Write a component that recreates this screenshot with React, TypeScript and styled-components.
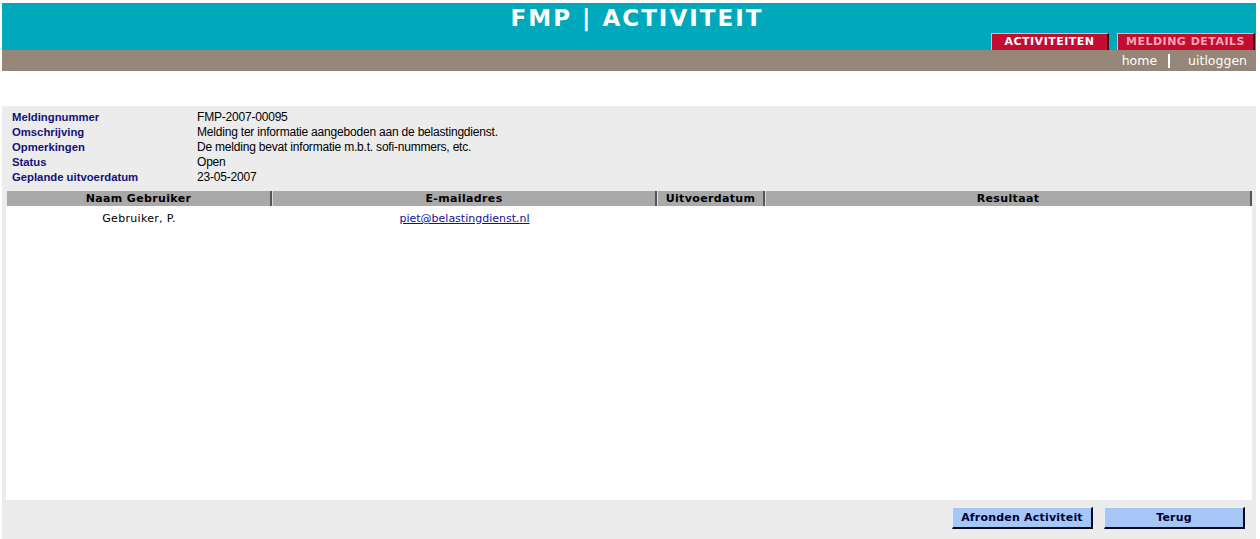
import React, { FunctionComponent } from "react";
import styled, { createGlobalStyle } from "styled-components";

interface TabProps {
  active?: boolean;
  width: number;
}

interface MeldingField {
  label: string;
  value: string;
}

interface Gebruiker {
  naam: string;
  email: string;
  uitvoerdatum: string;
  resultaat: string;
}

const meldingFields: MeldingField[] = [
  { label: "Meldingnummer", value: "FMP-2007-00095" },
  {
    label: "Omschrijving",
    value: "Melding ter informatie aangeboden aan de belastingdienst."
  },
  {
    label: "Opmerkingen",
    value: "De melding bevat informatie m.b.t. sofi-nummers, etc."
  },
  { label: "Status", value: "Open" },
  { label: "Geplande uitvoerdatum", value: "23-05-2007" }
];

const gebruikers: Gebruiker[] = [
  {
    naam: "Gebruiker, P.",
    email: "piet@belastingdienst.nl",
    uitvoerdatum: "",
    resultaat: ""
  }
];

const columns = ["Naam Gebruiker", "E-mailadres", "Uitvoerdatum", "Resultaat"];

const App: FunctionComponent = () => {
  return (
    <Page>
      <GlobalStyle />
      <Header>
        <Title>FMP | ACTIVITEIT</Title>
        <TabRow>
          <Tab active width={118}>
            ACTIVITEITEN
          </Tab>
          <Tab width={138}>MELDING DETAILS</Tab>
        </TabRow>
      </Header>
      <NavBar>
        <NavLink href="#">home</NavLink>
        <NavDivider />
        <NavLink href="#">uitloggen</NavLink>
      </NavBar>
      <Spacer />
      <Panel>
        <InfoList>
          {meldingFields.map(field => (
            <InfoRow key={field.label}>
              <InfoLabel>{field.label}</InfoLabel>
              <InfoValue>{field.value}</InfoValue>
            </InfoRow>
          ))}
        </InfoList>
        <Table>
          <HeaderRow>
            {columns.map(column => (
              <HeaderCell key={column}>{column}</HeaderCell>
            ))}
          </HeaderRow>
          <TableBody>
            {gebruikers.map((gebruiker, index) => (
              <DataRow key={index}>
                <DataCell>{gebruiker.naam}</DataCell>
                <DataCell>
                  <MailLink href="#">{gebruiker.email}</MailLink>
                </DataCell>
                <DataCell>{gebruiker.uitvoerdatum}</DataCell>
                <DataCell>{gebruiker.resultaat}</DataCell>
              </DataRow>
            ))}
          </TableBody>
        </Table>
        <ButtonBar>
          <ActionButton type="button">Afronden Activiteit</ActionButton>
          <ActionButton type="button">Terug</ActionButton>
        </ButtonBar>
      </Panel>
    </Page>
  );
};

export default App;

const GlobalStyle = createGlobalStyle`
  html, body {
    margin: 0;
    padding: 0;
    background: #fff;
    font-family: "DejaVu Sans", Verdana, sans-serif;
  }
`;

const Page = styled.div`
  margin: 3px 4px 0 2px;
  height: 536px;
  display: flex;
  flex-direction: column;
`;

const Header = styled.div`
  background-color: #00a8bc;
  height: 47px;
  padding-top: 1px;
  box-sizing: border-box;
  display: flex;
  flex-direction: column;
`;

const Title = styled.h1`
  margin: 0;
  padding-left: 16px;
  text-align: center;
  color: #fff;
  font-family: "DejaVu Sans", Verdana, sans-serif;
  font-weight: bold;
  font-size: 23px;
  line-height: 28px;
  letter-spacing: 2px;
`;

const TabRow = styled.div`
  display: flex;
  justify-content: flex-end;
  gap: 8px;
  margin-top: auto;
  padding-right: 1px;
`;

const Tab = styled.div<TabProps>`
  width: ${props => props.width}px;
  height: 17px;
  box-sizing: border-box;
  background-color: #c40c30;
  border-top: 1px solid #e8b4bc;
  border-left: 1px solid #e8b4bc;
  border-right: 2px solid #4a0612;
  color: ${props => (props.active ? "#fff" : "#f5a6b6")};
  font-size: 11px;
  font-weight: bold;
  line-height: 16px;
  text-align: center;
  letter-spacing: 0.5px;
`;

const NavBar = styled.div`
  background-color: #958677;
  height: 21px;
  display: flex;
  justify-content: flex-end;
  align-items: center;
  padding-right: 9px;
`;

const NavLink = styled.a`
  color: #fff;
  text-decoration: none;
  font-size: 12.5px;
  line-height: 14px;
`;

const NavDivider = styled.span`
  width: 2px;
  height: 14px;
  background-color: #fff;
  margin: 0 18px 0 11px;
`;

const Spacer = styled.div`
  height: 35px;
`;

const Panel = styled.div`
  flex: 1;
  background-color: #ececec;
  padding: 4px 4px 10px;
  display: flex;
  flex-direction: column;
`;

const InfoList = styled.div`
  padding-left: 6px;
`;

const InfoRow = styled.div`
  display: grid;
  grid-template-columns: 185px 1fr;
  line-height: 15px;
`;

const InfoLabel = styled.span`
  font-family: "Liberation Sans", Arial, sans-serif;
  font-weight: bold;
  font-size: 11.3px;
  color: #12127a;
`;

const InfoValue = styled.span`
  font-family: "Liberation Sans", Arial, sans-serif;
  font-size: 12px;
  letter-spacing: -0.2px;
  color: #000;
`;

const Table = styled.div`
  margin-top: 6px;
  flex: 1;
  display: flex;
  flex-direction: column;
`;

const HeaderRow = styled.div`
  display: grid;
  grid-template-columns: 265px 385px 108px 1fr;
  padding-left: 1px;
`;

const HeaderCell = styled.div`
  height: 15px;
  box-sizing: border-box;
  background-color: #a9a9a9;
  border-left: 1px solid #dcdcdc;
  border-right: 2px solid #555;
  color: #000;
  font-size: 11px;
  font-weight: bold;
  line-height: 15px;
  letter-spacing: 0.35px;
  text-align: center;

  &:first-child {
    border-left: none;
  }
`;

const TableBody = styled.div`
  flex: 1;
  background-color: #fff;
  padding-top: 5px;
`;

const DataRow = styled.div`
  display: grid;
  grid-template-columns: 266px 385px 108px 1fr;
`;

const DataCell = styled.div`
  font-size: 11px;
  line-height: 15px;
  text-align: center;
  letter-spacing: 0.3px;
  color: #000;
`;

const MailLink = styled.a`
  color: #10109c;
  text-decoration: underline;
  letter-spacing: 0;
`;

const ButtonBar = styled.div`
  display: flex;
  justify-content: flex-end;
  gap: 11px;
  margin-top: 7px;
  padding-right: 7px;
`;

const ActionButton = styled.button`
  width: 141px;
  height: 22px;
  box-sizing: border-box;
  margin: 0;
  padding: 0;
  background-color: #a6c6f6;
  border-style: solid;
  border-width: 1px 2px 2px 1px;
  border-color: #e4eeff #0a0a24 #0a0a24 #e4eeff;
  color: #000033;
  font-family: "DejaVu Sans", Verdana, sans-serif;
  font-size: 11px;
  font-weight: bold;
  letter-spacing: 0.2px;
  cursor: pointer;
`;
